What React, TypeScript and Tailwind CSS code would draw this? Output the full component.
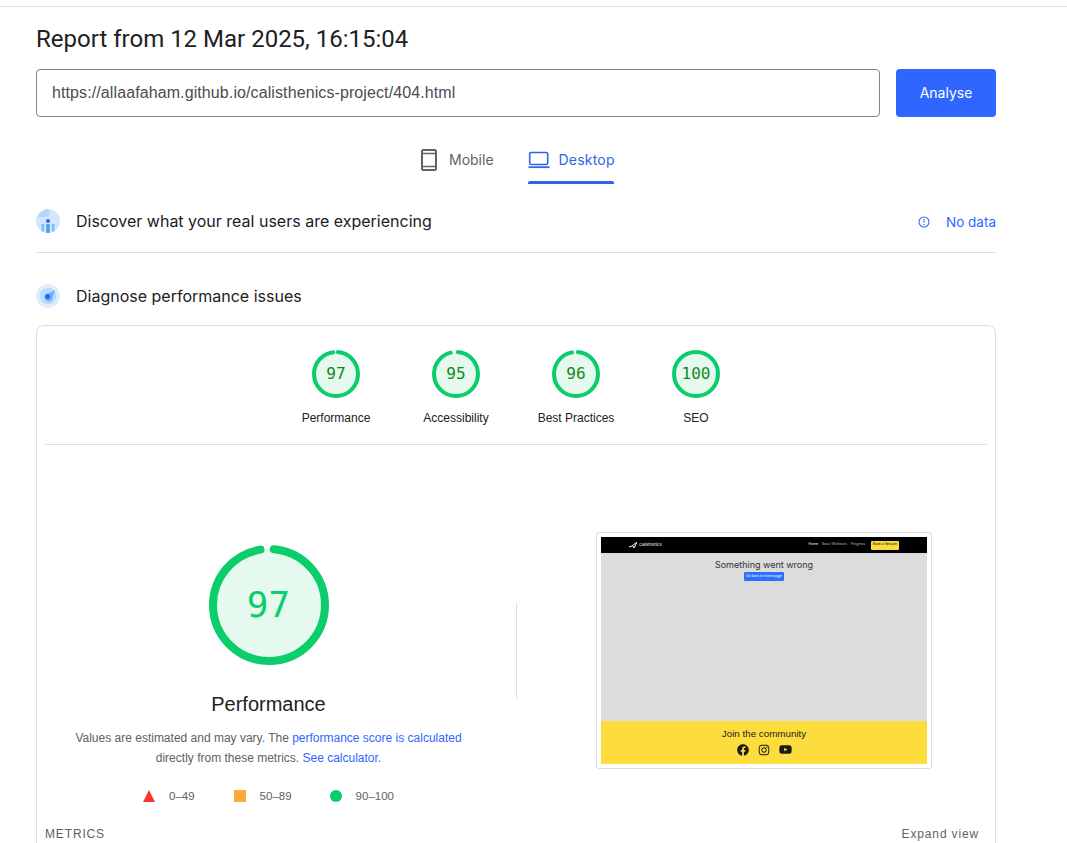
import { FaFacebook, FaInstagram, FaYoutube } from "react-icons/fa";

const sans = "font-['Liberation_Sans',Arial,sans-serif]";
const inter = "font-['Inter',sans-serif]";

const scores = [
  { value: 97, label: "Performance" },
  { value: 95, label: "Accessibility" },
  { value: 96, label: "Best Practices" },
  { value: 100, label: "SEO" },
];

const Gauge = ({ value, size, stroke }: { value: number; size: number; stroke: number }) => {
  const r = (size - stroke) / 2;
  const c = 2 * Math.PI * r;
  return (
    <svg width={size} height={size} viewBox={`0 0 ${size} ${size}`} className="block -rotate-90">
      <circle cx={size / 2} cy={size / 2} r={r} fill="#e5f9ef" />
      <circle
        cx={size / 2}
        cy={size / 2}
        r={r}
        fill="none"
        stroke="#0ccd6b"
        strokeWidth={stroke}
        strokeLinecap="round"
        strokeDasharray={value === 100 ? `${c} 0` : `${(c * (value - 1)) / 100} ${c}`}
        strokeDashoffset={value === 100 ? 0 : -c * 0.014}
      />
    </svg>
  );
};

const ScoreItem = ({ value, label }: { value: number; label: string }) => (
  <div className="w-[120px] flex flex-col items-center">
    <div className="relative w-[48px] h-[48px]">
      <Gauge value={value} size={48} stroke={4} />
      <span className="absolute inset-0 flex items-center justify-center font-['DejaVu_Sans_Mono',monospace] text-[16px] text-[#118a1e]">
        {value}
      </span>
    </div>
    <p className={`${sans} mt-[12px] text-[12px] leading-[16px] text-[#212121]`}>{label}</p>
  </div>
);

const CruxIcon = () => (
  <svg width="24" height="24" viewBox="0 0 24 24" className="shrink-0">
    <circle cx="12" cy="12" r="12" fill="#d2e6ff" />
    <path d="M1 9c2-4 6-8 10-9 3 2 4 5 1 7-3 2-7 0-11 2z" fill="#b5d5fb" />
    <circle cx="12" cy="12" r="2" fill="#2962ff" />
    <rect x="10.2" y="15" width="3.6" height="9" fill="#4aa3f5" />
    <rect x="5.5" y="15" width="2.6" height="7.5" fill="#7cbcf8" />
    <rect x="15.9" y="15" width="2.6" height="7.5" fill="#7cbcf8" />
  </svg>
);

const DiagnoseIcon = () => (
  <svg width="24" height="24" viewBox="0 0 24 24" className="shrink-0">
    <circle cx="12" cy="12" r="12" fill="#e0efff" />
    <circle cx="12" cy="12" r="8.5" fill="#bcdcfd" />
    <path d="M19 6l-3 10c-2 2-6 2-7-1-1-2 0-4 2-5z" fill="#6fb0f7" />
    <circle cx="11.5" cy="12.5" r="2.5" fill="#2962ff" />
  </svg>
);

const App = () => {
  return (
    <main className={`${inter} w-[1067px] h-[843px] overflow-hidden bg-white pt-[6px]`}>
      <div className="border-t border-[#dfe1e3] pl-[36px]">
        <div className="w-[960px]">
          <h1 className="mt-[17px] h-[30px] font-['Roboto',sans-serif] text-[24px] leading-[30px] text-[#202124]">
            Report from 12 Mar 2025, 16:15:04
          </h1>

          <div className="mt-[15px] flex gap-[16px]">
            <div className={`${sans} w-[844px] h-[48px] border border-[#80868b] rounded-[4px] pl-[15px] flex items-center text-[16px] tracking-[0.1px] text-[#4a4d50]`}>
              https://allaafaham.github.io/calisthenics-project/404.html
            </div>
            <button className="w-[100px] h-[48px] pb-[1px] rounded-[4px] bg-[#2e66ff] text-white text-[14px]">Analyse</button>
          </div>

          <div className="mt-[20px] pl-[385px] flex gap-[34px] h-[48px] text-[14px]">
            <div className="flex items-start pt-[13px] gap-[12px] text-[#5f6368]">
              <svg width="16" height="24" viewBox="0 0 16 24" className="-mt-[1px]" fill="none">
                <rect x="1" y="1" width="14" height="20" rx="1.5" stroke="#5f6368" strokeWidth="2" />
                <path d="M1 4.5h14M1 17.5h14" stroke="#5f6368" strokeWidth="1.5" />
              </svg>
              <span className="leading-[20px]">Mobile</span>
            </div>
            <div className="relative flex items-start pt-[13px] gap-[9px] text-[#2e66e8]">
              <svg width="22" height="18" viewBox="0 0 22 18" className="mt-[1px]" fill="none">
                <rect x="1.7" y="1.5" width="18" height="12" rx="1.5" stroke="#2e66e8" strokeWidth="1.6" />
                <path d="M0.5 16.2h21" stroke="#2e66e8" strokeWidth="1.8" />
              </svg>
              <span className="leading-[20px] tracking-[0.2px]">Desktop</span>
              <span className="absolute left-0 right-[1px] bottom-[1px] h-[3px] rounded-t-[2px] bg-[#2e66e8]" />
            </div>
          </div>

          <div className="mt-[12px] h-[56px] pb-[7px] border-b border-[#dadce0] flex items-center">
            <CruxIcon />
            <span className="ml-[16px] text-[16px] text-[#202124]">Discover what your real users are experiencing</span>
            <span className="ml-auto pt-[2px] flex items-center gap-[16px] text-[13.5px] text-[#2e66ff]">
              <svg width="12" height="12" viewBox="0 0 12 12" fill="none">
                <circle cx="6" cy="6" r="5" stroke="#2e66ff" strokeWidth="1.1" />
                <path d="M6 3v3.6M6 8v1" stroke="#2e66ff" strokeWidth="1.1" />
              </svg>
              No data
            </span>
          </div>

          <div className="mt-[31px] flex items-center h-[24px]">
            <DiagnoseIcon />
            <span className="ml-[16px] text-[16px] text-[#202124]">Diagnose performance issues</span>
          </div>

          <section className="mt-[17px] h-[600px] border border-[#dadce0] rounded-[8px] px-[8px]">
            <div className="pt-[24px] h-[119px] border-b border-[#e0e0e0] flex justify-center">
              {scores.map((s) => (
                <ScoreItem key={s.label} value={s.value} label={s.label} />
              ))}
            </div>

            <div className="flex h-[332px] pt-[87px]">
              <div className="w-[471px] pr-[24px] shrink-0 flex flex-col items-center">
                <div className="relative w-[120px] h-[120px] mt-[13px]">
                  <Gauge value={97} size={120} stroke={8} />
                  <span className="absolute inset-0 flex items-center justify-center font-['DejaVu_Sans_Mono',monospace] text-[36px] text-[#0ccd6b]">
                    97
                  </span>
                </div>
                <h2 className={`${sans} mt-[24px] text-[20px] leading-[30px] text-[#212121]`}>Performance</h2>
                <p className={`${sans} mt-[9px] w-[420px] text-center text-[12px] leading-[20px] text-[#616161]`}>
                  Values are estimated and may vary. The <span className="text-[#2e66ff]">performance score is calculated</span>
                  <br />
                  directly from these metrics. <span className="text-[#2e66ff]">See calculator.</span>
                </p>
                <div className={`${sans} mt-[20px] flex items-center text-[11.5px] leading-[16px] text-[#616161]`}>
                  <span className="w-0 h-0 border-x-[6px] border-x-transparent border-b-[12px] border-b-[#ff3333]" />
                  <span className="ml-[14px]">0–49</span>
                  <span className="ml-[39px] w-[12px] h-[12px] bg-[#ffaa33]" />
                  <span className="ml-[14px]">50–89</span>
                  <span className="ml-[38px] w-[12px] h-[12px] rounded-full bg-[#0ccd6b]" />
                  <span className="ml-[14px]">90–100</span>
                </div>
              </div>

              <div className="w-px h-[96px] mt-[71px] bg-[#dadce0]" />

              <div className="ml-[79px] w-[336px] h-[237px] border border-[#dadce0] rounded-[3px] p-[4px] shrink-0">
                <div className={`${inter} w-[326px] h-[227px] flex flex-col`}>
                  <div className="h-[16px] bg-black flex items-center pl-[28px] pr-[28px] text-[3.4px] whitespace-nowrap text-[#bdbdbd]">
                    <svg width="8" height="7" viewBox="0 0 8 7" fill="none">
                      <path d="M0 5l3-1 5-4-3 6-1-2" stroke="#fff" strokeWidth="1" />
                    </svg>
                    <span className="ml-[2px] text-[4px] text-white">Calisthenics</span>
                    <span className="ml-auto text-white">Home</span>
                    <span className="ml-[4px]">Basic Workouts</span>
                    <span className="ml-[4px]">Progress</span>
                    <span className="ml-[6px] w-[28px] h-[9px] bg-[#fddd3d] rounded-[1px] text-black flex items-center justify-center">Book a Session</span>
                  </div>
                  <div className="flex-1 bg-[#dcdcdc] flex flex-col items-center pt-[5px]">
                    <p className="text-[9px] leading-[13px] text-[#333]">Something went wrong</p>
                    <span className="mt-[1px] w-[40px] h-[9px] bg-[#2e6fff] rounded-[1px] text-white text-[3.3px] whitespace-nowrap flex items-center justify-center">Go back to home page</span>
                  </div>
                  <div className="h-[43px] bg-[#fddd3d] flex flex-col items-center pt-[6px]">
                    <p className={`${sans} text-[9.8px] leading-[13px] text-[#222]`}>Join the community</p>
                    <div className="mt-[3px] flex items-center gap-[9px] text-[#1a1a1a]">
                      <FaFacebook size={12} />
                      <FaInstagram size={12} />
                      <FaYoutube size={13} />
                    </div>
                  </div>
                </div>
              </div>
            </div>

            <div className={`${sans} mt-[49px] flex justify-between pr-[8px] text-[12px] leading-[16px] tracking-[0.85px] text-[#616161]`}>
              <span>METRICS</span>
              <span>Expand view</span>
            </div>
          </section>
        </div>
      </div>
    </main>
  );
};

export default App;
